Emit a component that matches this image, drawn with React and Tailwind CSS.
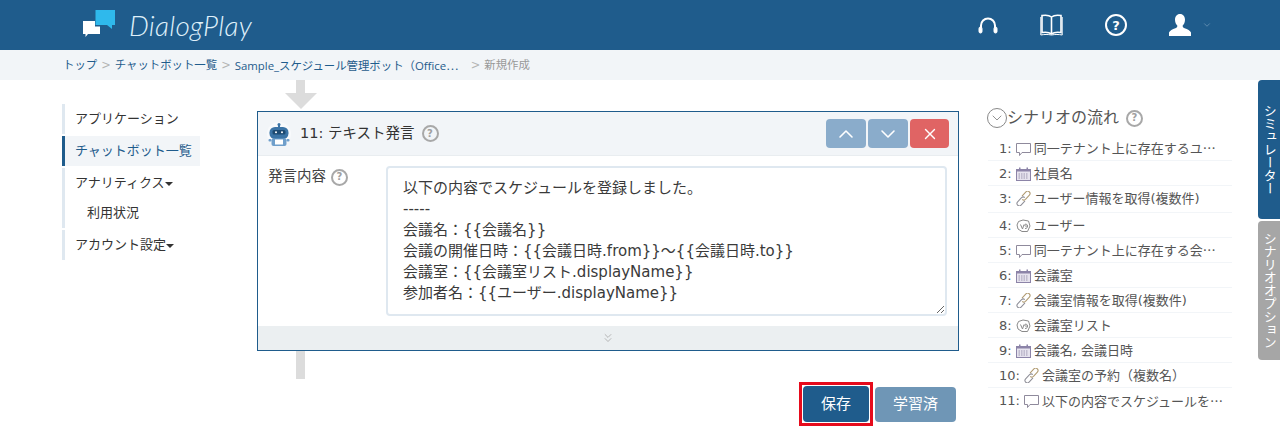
import { ChevronDown, ChevronUp, ChevronsDown, X } from 'lucide-react';

const FONT = "font-['DejaVu_Sans','Noto_Sans_CJK_JP',sans-serif]";

const scenario = [
  ['1:', 'bubble', '同一テナント上に存在するユ', true],
  ['2:', 'calendar', '社員名'],
  ['3:', 'link', 'ユーザー情報を取得(複数件)'],
  ['4:', 'brain', 'ユーザー'],
  ['5:', 'bubble', '同一テナント上に存在する会', true],
  ['6:', 'calendar', '会議室'],
  ['7:', 'link', '会議室情報を取得(複数件)'],
  ['8:', 'brain', '会議室リスト'],
  ['9:', 'calendar', '会議名, 会議日時'],
  ['10:', 'link', '会議室の予約（複数名）'],
  ['11:', 'bubble', '以下の内容でスケジュールを', true],
];

const messageText = `以下の内容でスケジュールを登録しました。
-----
会議名：{{会議名}}
会議の開催日時：{{会議日時.from}}～{{会議日時.to}}
会議室：{{会議室リスト.displayName}}
参加者名：{{ユーザー.displayName}}`;

function Help({ className = '' }) {
  return (
    <span className={`inline-flex h-[17px] w-[17px] shrink-0 items-center justify-center rounded-full border-2 border-[#a8a8a8] text-[10px] font-bold leading-none text-[#a0a0a0] ${className}`}>
      ?
    </span>
  );
}

function ScenarioIcon({ type }) {
  if (type === 'bubble') {
    return (
      <svg width="15" height="14" viewBox="0 0 15 14" fill="none" stroke="#8f8a9c" strokeWidth="1" className="block">
        <path d="M.5 1.500h14v9H6l-2.500 3v-3h-3z" />
      </svg>
    );
  }
  if (type === 'calendar') {
    return (
      <svg width="15" height="14" viewBox="0 0 15 14" className="block">
        <rect x="0.5" y="2.5" width="14" height="11" fill="#e6e3ee" stroke="#8c84a8" />
        <rect x="1" y="2" width="13" height="2.5" fill="#8c84a8" />
        <rect x="3" y="0.5" width="1.5" height="3" fill="#8c84a8" />
        <rect x="10.5" y="0.5" width="1.5" height="3" fill="#8c84a8" />
        <path d="M2.500 7h10M2.500 9h10M2.500 11h10" stroke="#9c96b0" strokeDasharray="1.5 1" />
      </svg>
    );
  }
  if (type === 'link') {
    return (
      <svg width="15" height="15" viewBox="1.500 1 12 13" fill="none" stroke="#8f8f98" strokeWidth="0.9" className="block">
        <path d="M6.200 5.500 9.600 1.800a2 2 0 0 1 3 2.700L9.200 8.200a2 2 0 0 1-2.800 0" stroke="#b09a70" />
        <path d="M8.800 9.500 5.400 13.200a2 2 0 0 1-3-2.700l3.400-3.700a2 2 0 0 1 2.800 0" />
      </svg>
    );
  }
  return (
    <svg width="15" height="14" viewBox="0 0 15 14" fill="none" stroke="#8a8a8a" strokeWidth="1" className="block">
      <path d="M2.500 2.500 7 1l5.500 1L14 7l-2.500 5.500H6L2 10 1 6z" />
      <path d="M4.500 5.500 6.500 10l1.500-4.500M9 9.500c2 0 2.500-1 2.500-2.500S10 4.500 9 5.500s0 2 2.500 1.500" />
    </svg>
  );
}

function Logo() {
  return (
    <svg width="33" height="30" viewBox="0 0 33 30" className="block">
      <path d="M13.500 0H33v15h-3v4l-5-4H13.500z" fill="#2fb9ec" />
      <path d="M1 11h12v5.500h5V24H6l-2.500 3v-3H1z" fill="#fff" />
    </svg>
  );
}

function Bot() {
  return (
    <svg width="24" height="26" viewBox="0 0 24 26" className="block">
      <circle cx="12" cy="13" r="12" fill="#f8fafc" />
      <circle cx="12" cy="3.500" r="1.500" fill="#3b74a6" />
      <rect x="11" y="4" width="2" height="3" fill="#3b74a6" />
      <rect x="2.500" y="6" width="19" height="12" rx="5.500" fill="#3b74a6" />
      <rect x="5.500" y="9" width="13" height="4.500" rx="1.500" fill="#1c4a72" />
      <circle cx="9" cy="11.250" r="1" fill="#fff" />
      <circle cx="15" cy="11.250" r="1" fill="#fff" />
      <rect x="4.500" y="17.500" width="15" height="7.500" rx="2" fill="#6f9fcb" />
      <rect x="8" y="18.500" width="8" height="5" fill="#fff" />
      <rect x="1.500" y="18" width="3" height="2.500" rx="1" fill="#6f9fcb" />
      <rect x="19.500" y="18" width="3" height="2.500" rx="1" fill="#6f9fcb" />
    </svg>
  );
}

function Sidebar() {
  return (
    <nav className="mt-[24px] flex w-[138px] shrink-0 flex-col gap-[2px] text-[13px] text-[#333]">
      <div className="flex h-[30px] items-center border-l-[3px] border-[#dfe8f0] pl-[10px]">アプリケーション</div>
      <div className="flex h-[30px] items-center border-l-[3px] border-[#1f5c8c] bg-[#f2f5f8] pl-[10px] text-[#1f5c8c]">チャットボット一覧</div>
      <div className="border-l-[3px] border-[#dfe8f0]">
        <div className="flex h-[30px] items-center pl-[10px]">
          アナリティクス
          <span className="mt-[1px] border-x-[4px] border-t-[4px] border-x-transparent border-t-[#333]" />
        </div>
        <div className="flex h-[30px] items-center pl-[22px]">利用状況</div>
      </div>
      <div className="flex h-[30px] items-center border-l-[3px] border-[#dfe8f0] pl-[10px]">
        アカウント設定
        <span className="mt-[1px] border-x-[4px] border-t-[4px] border-x-transparent border-t-[#333]" />
      </div>
    </nav>
  );
}

function Editor() {
  return (
    <div className="ml-[57px] w-[702px] shrink-0">
      <svg width="32" height="31" viewBox="0 0 32 31" className="ml-[28px] block">
        <path d="M11 0h9v13h12L16 29 0 13h11z" fill="#dcdcdc" />
      </svg>
      <section className="border border-[#1f5c8c]">
        <header className="flex h-[44px] items-center border-b border-[#e9edf0] bg-[#f2f5f8] pl-[9px] pr-[9px]">
          <Bot />
          <h2 className="ml-[9px] text-[14.5px] font-normal text-[#333]">11: テキスト発言</h2>
          <Help className="ml-[7px]" />
          <div className="ml-auto flex gap-[2px]">
            <button type="button" className="flex h-[29px] w-[40px] items-center justify-center rounded-[4px] bg-[#8aaccb] text-white">
              <ChevronUp size={24} strokeWidth={1.6} />
            </button>
            <button type="button" className="flex h-[29px] w-[40px] items-center justify-center rounded-[4px] bg-[#8aaccb] text-white">
              <ChevronDown size={24} strokeWidth={1.6} />
            </button>
            <button type="button" className="flex h-[29px] w-[39px] items-center justify-center rounded-[4px] bg-[#e06464] text-white">
              <X size={18} strokeWidth={1.8} />
            </button>
          </div>
        </header>
        <div className="flex h-[170px] pl-[10px] pt-[10px]">
          <div className="flex h-[22px] w-[118px] shrink-0 items-center text-[14.5px] text-[#444]">
            発言内容
            <Help className="ml-[5px]" />
          </div>
          <textarea
            readOnly
            defaultValue={messageText}
            className="h-[150px] w-[561px] rounded-[4px] border-2 border-[#dfe8f0] pl-[15px] pr-[10px] pt-[10px] text-[15px] leading-[21px] text-[#3a3a3a] outline-none"
          />
        </div>
        <div className="flex h-[24px] items-center justify-center bg-[#ebeff1] text-[#a8a8a8]">
          <ChevronsDown size={14} strokeWidth={1.4} />
        </div>
      </section>
      <div className="ml-[39px] h-[28px] w-[9px] bg-[#dcdcdc]" />
      <div className="mt-[3px] flex items-start justify-end gap-[2px] pr-[3px]">
        <div className="border-[3px] border-[#e60b1c] p-[1px]">
          <button type="button" className="block h-[36px] w-[66px] rounded-[4px] bg-[#1f5c8c] text-[15px] text-white">保存</button>
        </div>
        <button type="button" className="mt-[5px] h-[35px] w-[81px] rounded-[4px] bg-[#6f96b6] text-[15px] text-white">学習済</button>
      </div>
    </div>
  );
}

function ScenarioFlow() {
  return (
    <aside className="ml-[29px] mt-[28px] w-[244px] shrink-0">
      <div className="flex h-[20px] items-center text-[16px] text-[#555]">
        <span className="-ml-[1px] flex h-[20px] w-[20px] shrink-0 items-center justify-center rounded-full border border-[#888] text-[#777]">
          <ChevronDown size={16} strokeWidth={1.2} />
        </span>
        シナリオの流れ
        <Help className="ml-[7px]" />
      </div>
      <ul className="mt-[8px] text-[13px] text-[#555]">
        {scenario.map(([num, icon, text, more]) => (
          <li
            key={num}
            className={`flex items-center pl-[11px] pt-[1px] ${num === '3:' ? 'h-[27px] pb-[2px]' : 'h-[25px]'} ${num === '11:' ? '' : 'border-b border-[#f2f5f8]'}`}
          >
            <span className="mr-[4px] shrink-0">{num}</span>
            <span className="mr-[3px] shrink-0"><ScenarioIcon type={icon} /></span>
            <span className="whitespace-nowrap">
              {text}
              {more && <span className="font-['Noto_Sans_CJK_JP',sans-serif]">…</span>}
            </span>
          </li>
        ))}
      </ul>
    </aside>
  );
}

export default function App() {
  return (
    <div className={`relative h-[441px] w-[1280px] overflow-hidden bg-white ${FONT}`}>
      <header className="flex h-[50px] items-center bg-[#1f5c8c] pl-[82px] text-white">
        <Logo />
        <span className="ml-[14px] font-['Lato',sans-serif] text-[28px] font-light italic tracking-[0.3px] text-[#dff0fa]">DialogPlay</span>
        <div className="ml-auto flex items-center pr-[68px]">
          <svg width="20" height="17" viewBox="0 0 20 17" fill="none" stroke="#fff" strokeWidth="2" className="block">
            <path d="M3 11V8.500a7 7 0 0 1 14 0V11" />
            <rect x="1" y="10" width="3" height="6" rx="1.500" fill="#fff" strokeWidth="1" />
            <rect x="16" y="10" width="3" height="6" rx="1.500" fill="#fff" strokeWidth="1" />
          </svg>
          <svg width="23" height="22" viewBox="0 0 23 22" fill="none" stroke="#fff" strokeWidth="1.600" className="ml-[42px] block">
            <path d="M11.500 3C9 1 5 1 2 1.500v17c3-.5 7-.5 9.500 1.500 2.500-2 6.500-2 9.500-1.500v-17C18 1 14 1 11.500 3zM11.500 3v17" />
            <path d="M.8 3v18c3.500-.7 7-.7 10.700 0 3.700-.7 7.200-.7 10.700 0V3" strokeWidth="1" />
          </svg>
          <span className="ml-[42px] flex h-[22px] w-[22px] items-center justify-center rounded-full border-2 border-white text-[13px] font-bold leading-none">?</span>
          <svg width="22" height="22" viewBox="0 0 22 22" fill="#fff" className="ml-[42px] block">
            <path d="M11 0c3.200 0 5 2.500 5 5.800 0 2.500-1 4.700-2.400 6 .1 1.200.5 1.800 2 2.400 3 1.100 5.600 2.200 6.400 4.300V22H0v-3.500c.8-2.100 3.400-3.200 6.400-4.300 1.500-.6 1.900-1.200 2-2.400C7 10.500 6 8.300 6 5.800 6 2.500 7.800 0 11 0z" />
          </svg>
          <ChevronDown size={10} strokeWidth={1.5} className="ml-[11px] text-[#7fa3c0]" />
        </div>
      </header>

      <div className="flex h-[30px] items-center bg-[#f2f5f8] pl-[63px] pt-[1px] text-[11.4px] text-[#1f5c8c]">
        <span>トップ</span>
        <span className="mx-[4px] text-[#b5b5b5]">&gt;</span>
        <span>チャットボット一覧</span>
        <span className="mx-[4px] text-[#b5b5b5]">&gt;</span>
        <span className="w-[226px] whitespace-nowrap font-['Open_Sans','Noto_Sans_CJK_JP',sans-serif]">
          Sample_スケジュール管理ボット（Office<span className="font-['Noto_Sans_CJK_JP',sans-serif]">…</span>
        </span>
        <span className="ml-[10px] mr-[4px] text-[#b5b5b5]">&gt;</span>
        <span className="text-[#999]">新規作成</span>
      </div>

      <main className="flex pl-[62px]">
        <Sidebar />
        <Editor />
        <ScenarioFlow />
      </main>

      <div className="absolute left-[1258px] top-[80px] flex h-[139px] w-[22px] items-center justify-center rounded-l-[4px] bg-[#1f5c8c] text-[13px] text-white [writing-mode:vertical-rl]">シミュレーター</div>
      <div className="absolute left-[1258px] top-[221px] flex h-[139px] w-[22px] items-center justify-center rounded-l-[4px] bg-[#a6a6a6] text-[13px] text-white [writing-mode:vertical-rl]">シナリオオプション</div>
    </div>
  );
}
